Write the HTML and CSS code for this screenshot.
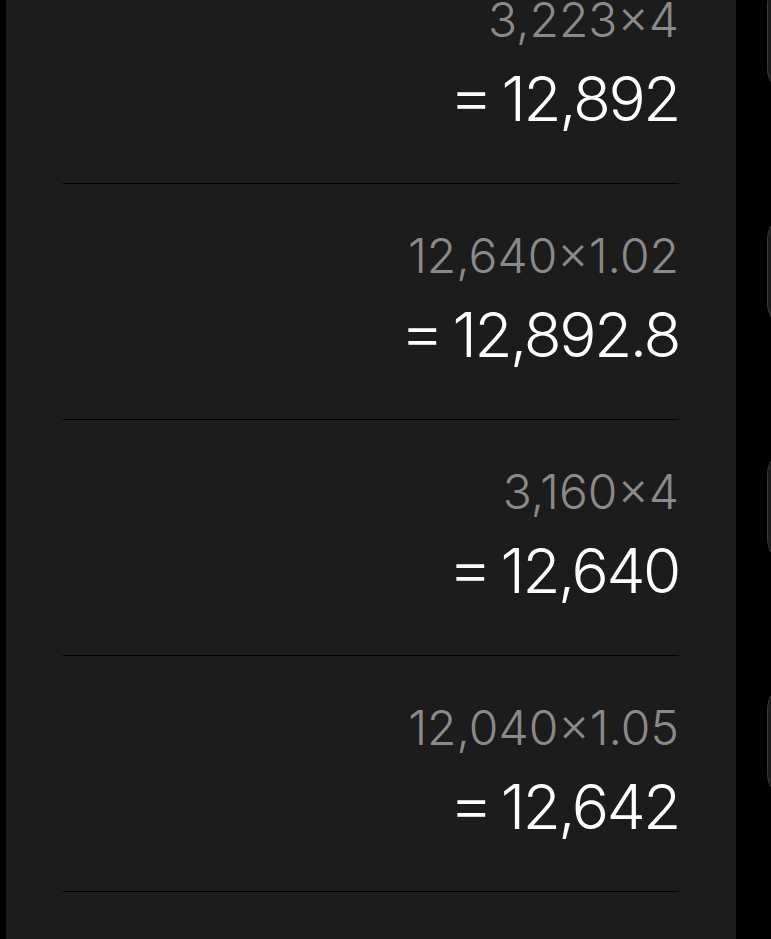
FILE: index.html
```html
<!DOCTYPE html>
<html lang="en">
<head>
  <meta charset="UTF-8" />
  <meta name="viewport" content="width=device-width, initial-scale=1.0"/>
  <title>Calculator History</title>
  <link rel="stylesheet" href="styles.css">
</head>
<body>

  <div class="screen">
    <section class="history">
      <div class="entry">
        <p class="expr">3,223×4</p>
        <p class="result"><span class="eq">=</span>12,892</p>
      </div>
      <div class="entry">
        <p class="expr">12,640×1.02</p>
        <p class="result"><span class="eq">=</span>12,892.8</p>
      </div>
      <div class="entry">
        <p class="expr">3,160×4</p>
        <p class="result"><span class="eq">=</span>12,640</p>
      </div>
      <div class="entry">
        <p class="expr">12,040×1.05</p>
        <p class="result"><span class="eq">=</span>12,642</p>
      </div>
    </section>

    <aside class="keys">
      <button class="key"></button>
      <button class="key"></button>
      <button class="key"></button>
      <button class="key"></button>
    </aside>
  </div>

</body>
</html>
```

FILE: styles.css
```css
*{margin:0;padding:0;box-sizing:border-box;}
html,body{height:100%;}
body{background:#000;font-family:'Inter','Roboto',sans-serif;overflow:hidden;}

.screen{display:flex;height:100%;padding-left:6px;}

.history{flex:0 0 730px;background:#1c1c1c;padding:0 57px;margin-top:-52px;height:calc(100% + 52px);}
.entry{padding:44px 0 48px;border-bottom:1px solid #000;text-align:right;}
.expr{font-size:48px;line-height:56px;font-weight:300;color:#8a8a8a;}
.result{font-size:62px;line-height:72px;font-weight:300;color:#fff;margin-top:15px;letter-spacing:-2.4px;}
.eq{display:inline-block;margin-right:12px;transform:translateY(-3px) scaleX(1.1);}

.keys{flex:0 0 auto;display:flex;flex-direction:column;gap:118px;margin-top:-22px;padding-left:31px;}
.key{width:90px;height:117px;border-radius:26px;background:#1d1d1d;border:1px solid #3a3a3a;}
```
